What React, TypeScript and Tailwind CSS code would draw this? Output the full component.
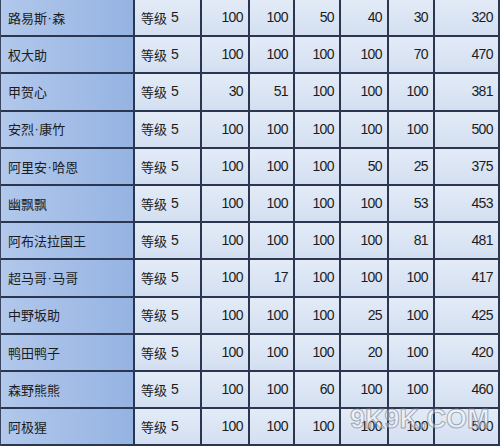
import React from "react";

const rows: [string, number[], number][] = [
  ["路易斯·森", [100, 100, 50, 40, 30], 320],
  ["权大助", [100, 100, 100, 100, 70], 470],
  ["甲贺心", [30, 51, 100, 100, 100], 381],
  ["安烈·康竹", [100, 100, 100, 100, 100], 500],
  ["阿里安·哈恩", [100, 100, 100, 50, 25], 375],
  ["幽飘飘", [100, 100, 100, 100, 53], 453],
  ["阿布法拉国王", [100, 100, 100, 100, 81], 481],
  ["超马哥·马哥", [100, 17, 100, 100, 100], 417],
  ["中野坂助", [100, 100, 100, 25, 100], 425],
  ["鸭田鸭子", [100, 100, 100, 20, 100], 420],
  ["森野熊熊", [100, 100, 60, 100, 100], 460],
  ["阿极猩", [100, 100, 100, 100, 100], 500],
];

const cell =
  "h-[37.2px] border-r-2 border-b-2 border-[#2b3650] flex items-center bg-gradient-to-b from-[#e3ebf7] to-[#d3dff1]";
const num = "justify-end pr-[5px] text-[14px] tracking-[-0.6px] font-['Liberation_Sans',sans-serif]";

function Name({ text }: { text: string }) {
  const parts = text.split("·");
  return (
    <>
      {parts.map((p, i) => (
        <React.Fragment key={i}>
          {i > 0 && <span className="font-['Liberation_Sans',sans-serif] mx-[0.5px]">·</span>}
          {p}
        </React.Fragment>
      ))}
    </>
  );
}

export default function App() {
  return (
    <div className="relative w-[500px] h-[446px] overflow-hidden bg-[#e4ebf5] text-[#1c1c1c] font-['Noto_Sans','Noto_Sans_CJK_SC',sans-serif]">
      <div className="grid grid-cols-[134px_67px_48px_45px_46px_48px_46px_65px] border-l border-[#3a4660] w-[500px]">
        {rows.map(([name, vals, total], i) => (
          <React.Fragment key={i}>
            <div className="h-[37.2px] border-r-2 border-b-2 border-[#2b3650] flex items-center pl-[7px] text-[13px] font-['Noto_Sans_CJK_SC',sans-serif] bg-gradient-to-r from-[#b2c8ec] to-[#95b3e2]">
              <Name text={name} />
            </div>
            <div className={`${cell} pl-[6px] text-[13px] font-['Noto_Sans_CJK_SC',sans-serif] from-[#dde7f6] to-[#cddbf0]`}>
              等级 <span className="ml-[4px] font-['Liberation_Sans',sans-serif] text-[14px]">5</span>
            </div>
            {vals.map((v, j) => (
              <div key={j} className={`${cell} ${num}`}>
                {v}
              </div>
            ))}
            <div className={`${cell} ${num} pr-[3px]`}>{total}</div>
          </React.Fragment>
        ))}
      </div>
      <div className="absolute left-[350px] top-[406px] text-[27px] font-bold leading-none font-['Liberation_Sans',sans-serif] text-[rgba(255,255,255,0.4)] [-webkit-text-stroke:1px_rgba(130,136,148,0.7)]">
        9K9K.COM
      </div>
    </div>
  );
}
